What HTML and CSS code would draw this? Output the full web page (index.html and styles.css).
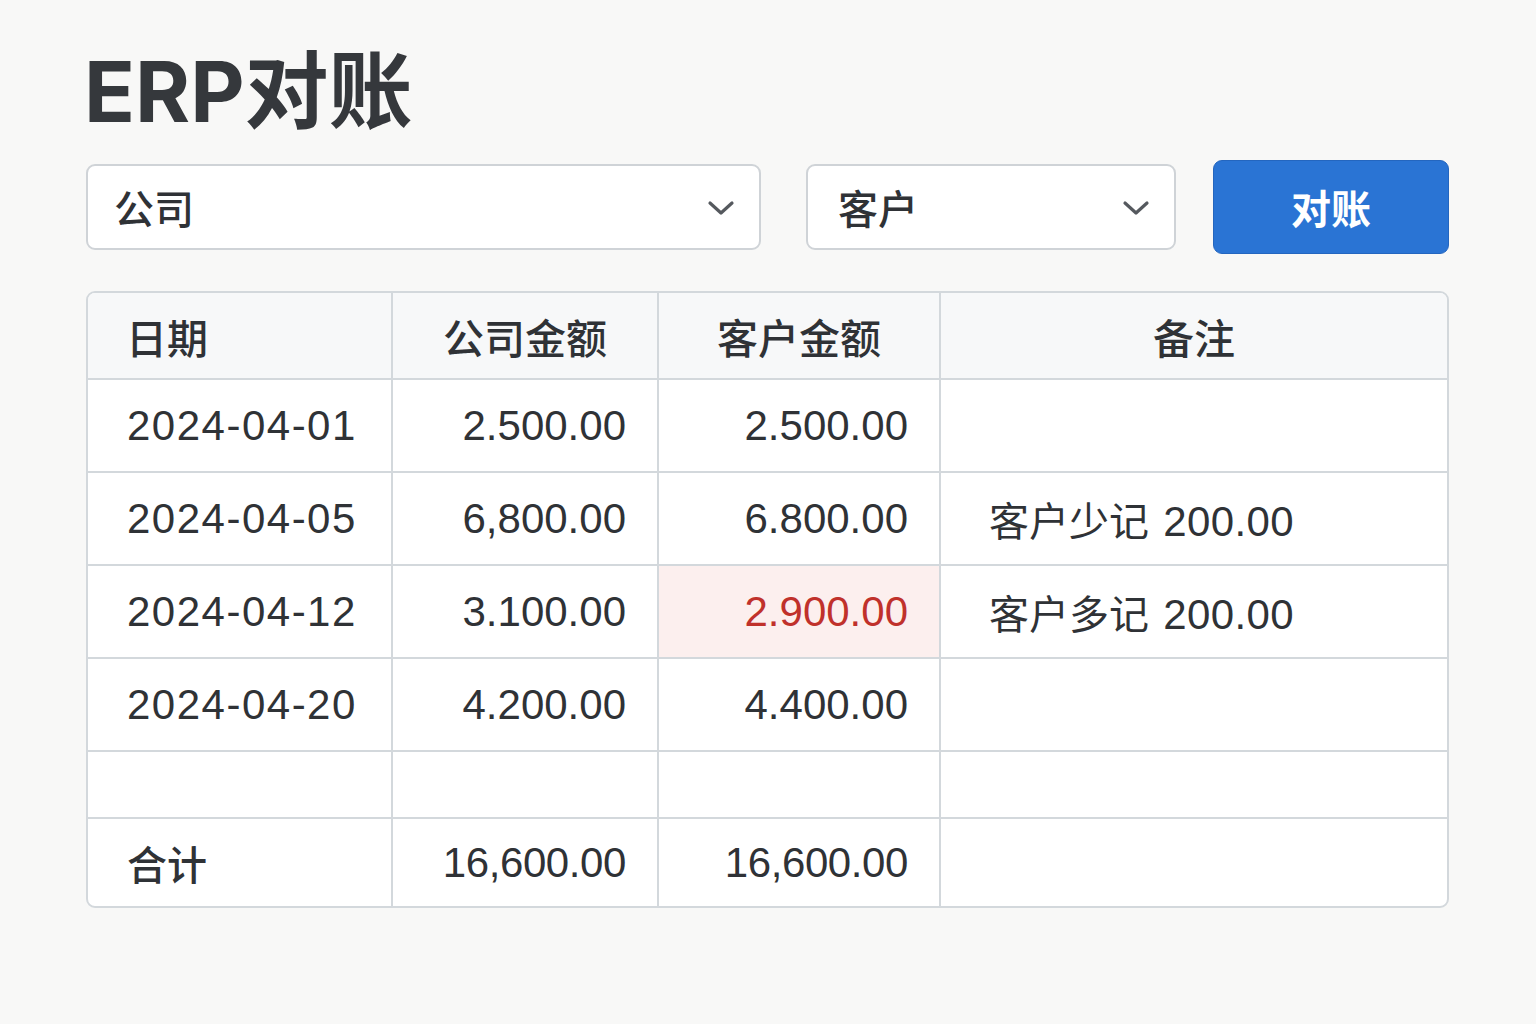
FILE: index.html
```html
<!DOCTYPE html>
<html lang="zh-CN">
<head>
    <meta charset="UTF-8">
    <meta name="viewport" content="width=device-width, initial-scale=1.0">
    <title>ERP对账</title>
    <link rel="stylesheet" href="styles.css">
</head>
<body>
    <div class="page">
        <h1 class="title">ERP对账</h1>

        <!-- 筛选条件 -->
        <div class="toolbar">
            <div class="select select-company">
                <span>公司</span>
                <svg class="chevron" viewBox="0 0 28 16" width="28" height="16"><path d="M3 3 L14 13 L25 3" fill="none" stroke="#55595e" stroke-width="3.2" stroke-linecap="round" stroke-linejoin="round"/></svg>
            </div>
            <div class="select select-customer">
                <span>客户</span>
                <svg class="chevron" viewBox="0 0 28 16" width="28" height="16"><path d="M3 3 L14 13 L25 3" fill="none" stroke="#55595e" stroke-width="3.2" stroke-linecap="round" stroke-linejoin="round"/></svg>
            </div>
            <button class="btn-reconcile">对账</button>
        </div>

        <!-- 对账明细 -->
        <div class="table-wrap">
            <table class="recon-table">
                <colgroup>
                    <col class="c-date">
                    <col class="c-company">
                    <col class="c-customer">
                    <col class="c-note">
                </colgroup>
                <thead>
                    <tr>
                        <th class="left">日期</th>
                        <th>公司金额</th>
                        <th>客户金额</th>
                        <th>备注</th>
                    </tr>
                </thead>
                <tbody>
                    <tr>
                        <td class="date">2024-04-01</td>
                        <td class="num">2.500.00</td>
                        <td class="num">2.500.00</td>
                        <td class="note"></td>
                    </tr>
                    <tr>
                        <td class="date">2024-04-05</td>
                        <td class="num">6,800.00</td>
                        <td class="num">6.800.00</td>
                        <td class="note">客户少记 <span class="amt">200.00</span></td>
                    </tr>
                    <tr>
                        <td class="date">2024-04-12</td>
                        <td class="num">3.100.00</td>
                        <td class="num diff">2.900.00</td>
                        <td class="note">客户多记 <span class="amt">200.00</span></td>
                    </tr>
                    <tr>
                        <td class="date">2024-04-20</td>
                        <td class="num">4.200.00</td>
                        <td class="num">4.400.00</td>
                        <td class="note"></td>
                    </tr>
                    <tr class="empty-row">
                        <td></td>
                        <td></td>
                        <td></td>
                        <td></td>
                    </tr>
                    <tr class="total-row">
                        <td class="label">合计</td>
                        <td class="num total">16,600.00</td>
                        <td class="num total">16,600.00</td>
                        <td class="note"></td>
                    </tr>
                </tbody>
            </table>
        </div>
    </div>
</body>
</html>
```

FILE: styles.css
```css
/* 页面基础 */
body {
    margin: 0;
    background-color: #f8f8f7;
    color: #2f3236;
    font-family: "Liberation Sans", "Noto Sans CJK SC", sans-serif;
}

.page {
    width: 1363px;
    padding: 40px 0 0 86px;
}

.title {
    margin: 0 0 0 -2px;
    font-family: Inter, "Noto Sans CJK SC", sans-serif;
    font-size: 84px;
    font-weight: 700;
    line-height: 104px;
    color: #35383c;
}

/* 筛选栏 */
.toolbar {
    display: flex;
    align-items: center;
    margin-top: 16px;
}

.select {
    box-sizing: border-box;
    height: 86px;
    display: flex;
    align-items: center;
    justify-content: space-between;
    padding: 0 24px 0 26px;
    background-color: #fff;
    border: 2px solid #cfd3d7;
    border-radius: 9px;
    font-family: "Noto Sans CJK SC", sans-serif;
    font-size: 40px;
    font-weight: 500;
    color: #2f3236;
}

.select-company {
    width: 675px;
}

.select-customer {
    width: 370px;
    margin-left: 45px;
    padding-left: 30px;
}

.chevron {
    margin-top: 2px;
}

.btn-reconcile {
    box-sizing: border-box;
    width: 236px;
    height: 94px;
    margin-left: 37px;
    background-color: #2a74d4;
    border: 1px solid #2466bf;
    border-radius: 9px;
    color: #fff;
    font-family: "Noto Sans CJK SC", sans-serif;
    font-size: 40px;
    font-weight: 700;
    cursor: pointer;
}

/* 表格 */
.table-wrap {
    margin-top: 37px;
    border: 2px solid #d3d8dc;
    border-radius: 9px;
    overflow: hidden;
    background-color: #fff;
}

.recon-table {
    width: 100%;
    border-collapse: collapse;
    table-layout: fixed;
}

.c-date { width: 304px; }
.c-company { width: 266px; }
.c-customer { width: 282px; }

.recon-table th,
.recon-table td {
    border-right: 2px solid #d3d8dc;
    border-bottom: 2px solid #d3d8dc;
    padding: 0;
}

.recon-table th:last-child,
.recon-table td:last-child {
    border-right: none;
}

.recon-table tr:last-child td {
    border-bottom: none;
}

.recon-table th {
    height: 85px;
    background-color: #f7f8f9;
    font-family: "Noto Sans CJK SC", sans-serif;
    font-size: 41px;
    font-weight: 500;
    text-align: center;
    color: #2f3236;
}

.recon-table th.left {
    text-align: left;
    padding-left: 38px;
}

.recon-table td {
    height: 91px;
    font-size: 42px;
    color: #2f3236;
}

.recon-table td.date {
    padding-left: 39px;
    letter-spacing: 1.5px;
}

.recon-table td.num {
    text-align: right;
    padding-right: 31px;
}

.recon-table td.note {
    padding-left: 48px;
    font-size: 40px;
    word-spacing: 3px;
}

.recon-table td.note .amt {
    font-size: 42px;
    letter-spacing: 0.4px;
}

.recon-table td.diff {
    background-color: #fcefee;
    color: #c0312b;
}

.empty-row td {
    height: 65px;
}

.total-row td {
    height: 87px;
}

.recon-table td.label {
    padding-left: 39px;
    font-family: "Noto Sans CJK SC", sans-serif;
    font-size: 40px;
    font-weight: 500;
}

.recon-table td.total {
    letter-spacing: -0.4px;
}
```
